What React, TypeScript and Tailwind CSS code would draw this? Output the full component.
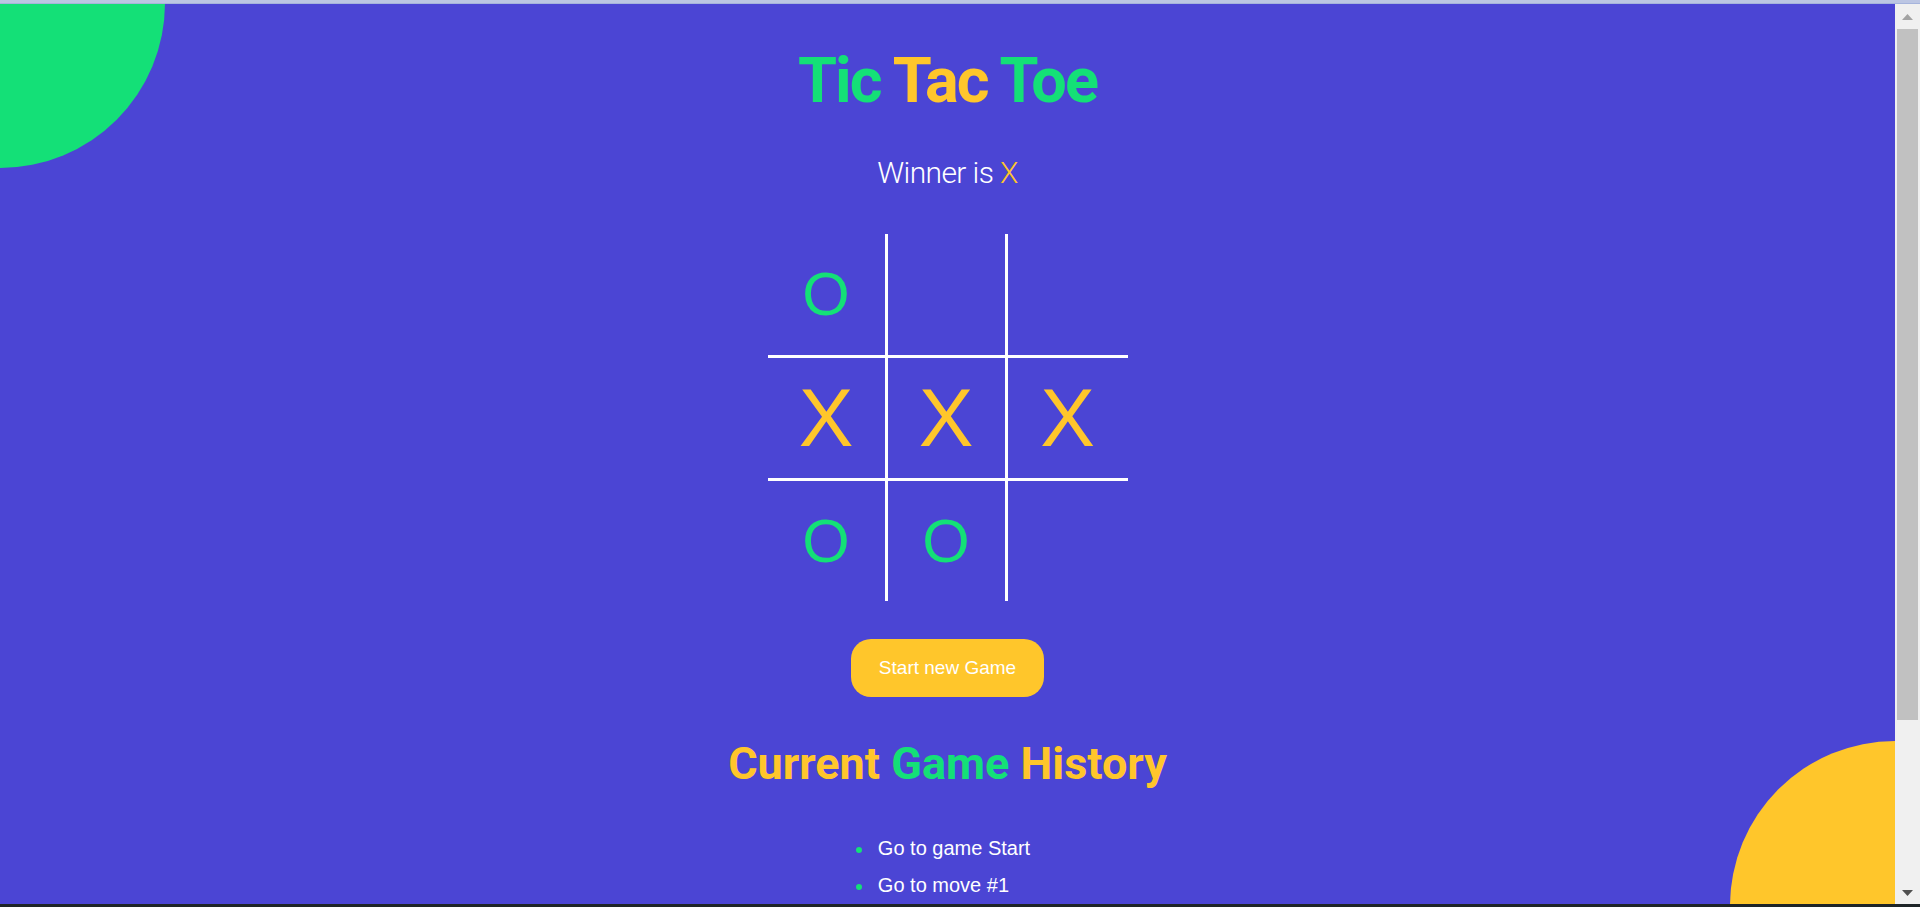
import React from 'react';

type Mark = 'X' | 'O' | null;

const board: Mark[] = ['O', null, null, 'X', 'X', 'X', 'O', 'O', null];
const winLine = [3, 4, 5];
const history = ['Go to game Start', 'Go to move #1'];

const Square: React.FC<{ value: Mark; index: number; win: boolean }> = ({ value, index, win }) => {
  const col = index % 3;
  const row = Math.floor(index / 3);
  return (
    <div
      className={
        "flex items-center justify-center border-white leading-none font-['Liberation_Sans',Arial,sans-serif] " +
        (col < 2 ? 'border-r-[3px] ' : '') +
        (row < 2 ? 'border-b-[3px] ' : '') +
        (value === 'X' ? 'text-[#ffc62b] ' : 'text-[#14e077] ') +
        (win ? 'text-[82px]' : 'text-[61px]')
      }
    >
      {value}
    </div>
  );
};

const Scrollbar: React.FC = () => (
  <div className="w-[25px] bg-[#f0f0f0] flex flex-col">
    <div className="h-[25px] flex items-center justify-center">
      <svg width="11" height="6" viewBox="0 0 11 6">
        <polygon points="5.5,0 11,6 0,6" fill="#a3a3a3" />
      </svg>
    </div>
    <div className="mx-[2px] h-[691px] bg-[#c1c1c1]" />
    <div className="flex-1" />
    <div className="h-[25px] flex items-center justify-center pt-[3px]">
      <svg width="11" height="6" viewBox="0 0 11 6">
        <polygon points="0,0 11,0 5.5,6" fill="#505050" />
      </svg>
    </div>
  </div>
);

export default function App() {
  return (
    <div className="w-full h-[907px] flex flex-col overflow-hidden">
      <div className="h-[3px] bg-[#bcc6e3]" />
      <div className="h-[1px] bg-[#a6b4dc]" />
      <div className="flex-1 flex min-h-0">
        <main className="relative flex-1 overflow-hidden bg-[#4b45d4] flex flex-col items-center font-['Roboto',sans-serif]">
          <div className="absolute w-[330px] h-[330px] -left-[165px] -top-[166px] rounded-full bg-[#14e077]" />
          <div className="absolute w-[330px] h-[330px] -right-[165px] -bottom-[167px] rounded-full bg-[#ffc62b]" />

          <h1 className="relative mt-[45px] text-[63px] leading-[63px] font-bold tracking-[-2px]">
            <span className="text-[#14e077]">Tic</span> <span className="text-[#ffc62b]">Tac</span>{' '}
            <span className="text-[#14e077]">Toe</span>
          </h1>

          <p className="relative mt-[46px] text-[30px] leading-[30px] font-light text-white tracking-[-0.6px]">
            Winner is <span className="text-[#ffc62b]">X</span>
          </p>

          <div className="relative mt-[46px] grid grid-cols-[120px_120px_120px] grid-rows-[124px_123px_120px]">
            {board.map((v, i) => (
              <Square key={i} value={v} index={i} win={winLine.includes(i)} />
            ))}
          </div>

          <button className="relative mt-[38px] w-[193px] h-[58px] rounded-[20px] bg-[#ffc62b] text-white text-[19px] font-['Liberation_Sans',Arial,sans-serif]">
            Start new Game
          </button>

          <h2 className="relative mt-[44px] text-[45px] leading-[45px] font-bold">
            <span className="text-[#ffc62b]">Current</span> <span className="text-[#14e077]">Game</span>{' '}
            <span className="text-[#ffc62b]">History</span>
          </h2>

          <ul className="relative mt-[44px] pr-[9px] font-['Liberation_Sans',Arial,sans-serif] text-[20px] leading-[37px] text-white">
            {history.map((h) => (
              <li key={h} className="flex items-center gap-[16px]">
                <span className="w-[6px] h-[6px] rounded-full bg-[#14e077] mt-[2px]" />
                <span>{h}</span>
              </li>
            ))}
          </ul>
        </main>
        <Scrollbar />
      </div>
      <div className="h-[3px] bg-[#1e2528]" />
    </div>
  );
}
